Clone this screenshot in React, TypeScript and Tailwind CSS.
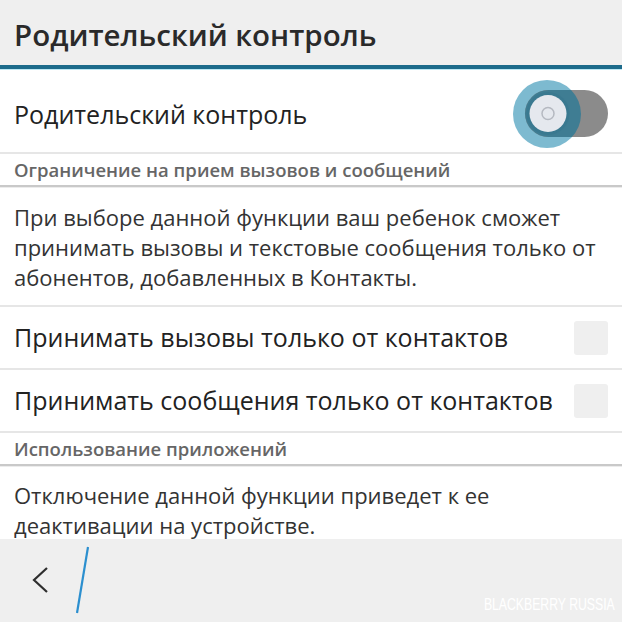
import React from "react";

const font = { fontFamily: '"Open Sans", "Noto Sans", sans-serif' };

function Toggle() {
  return (
    <svg width="100" height="80" viewBox="0 0 100 80" className="shrink-0 mt-[8px]">
      <defs>
        <clipPath id="halo">
          <circle cx="35" cy="39" r="34" />
        </clipPath>
      </defs>
      <circle cx="35" cy="39" r="34" fill="#7dbad0" />
      <rect x="13" y="15" width="83" height="47" rx="23.5" fill="#8b8b8b" />
      <rect x="13" y="15" width="83" height="47" rx="23.5" fill="#3f7d93" clipPath="url(#halo)" />
      <circle cx="36" cy="38.5" r="21.5" fill="#3a7990" />
      <circle cx="36" cy="38.5" r="18.5" fill="#e5e8ee" />
      <circle cx="36" cy="38.5" r="6" fill="none" stroke="#b5b9c1" strokeWidth="1.5" />
    </svg>
  );
}

function SectionHeader({ children }: { children: React.ReactNode }) {
  return (
    <div className="flex flex-col shrink-0">
      <div className="h-[31px] flex items-center px-[14px] text-[18.5px] font-semibold text-[#666666]">
        {children}
      </div>
      <div className="h-[2px] bg-[#c9c9c9]" />
      <div className="h-px bg-[#ececec]" />
    </div>
  );
}

function CheckRow({ label }: { label: string }) {
  return (
    <div className="h-[61px] shrink-0 flex items-center justify-between px-[14px]">
      <span className="text-[25px] text-[#222222]">{label}</span>
      <div className="w-[34px] h-[34px] rounded-[3px] bg-[#efefef]" />
    </div>
  );
}

export default function App() {
  return (
    <div className="w-[622px] h-[622px] overflow-hidden bg-white flex flex-col relative" style={font}>
      {/* title bar */}
      <div className="h-[65px] shrink-0 bg-[#efefef] flex items-center px-[14px]">
        <h1 className="text-[29.5px] font-semibold text-[#2a2a2a] mt-[6px]">Родительский контроль</h1>
      </div>
      <div className="h-[4px] shrink-0 bg-[#1d6b8b]" />
      <div className="h-px shrink-0 bg-[#bfe9f5]" />

      <div className="flex-1 overflow-hidden flex flex-col">
        <div className="h-[82px] shrink-0 flex items-center justify-between pl-[14px] pr-[10px]">
          <span className="text-[25px] text-[#222222] mt-[8px]">Родительский контроль</span>
          <Toggle />
        </div>
        <div className="h-[2px] shrink-0 bg-[#e6e6e6]" />

        <SectionHeader>Ограничение на прием вызовов и сообщений</SectionHeader>

        <p className="shrink-0 h-[117px] pt-[14px] px-[14px] text-[22px] leading-[30px] text-[#333333]">
          При выборе данной функции ваш ребенок сможет принимать вызовы и текстовые сообщения только от абонентов,
          добавленных в Контакты.
        </p>
        <div className="h-[2px] shrink-0 bg-[#e6e6e6]" />

        <CheckRow label="Принимать вызовы только от контактов" />
        <div className="h-[2px] shrink-0 bg-[#e6e6e6]" />
        <CheckRow label="Принимать сообщения только от контактов" />
        <div className="h-[2px] shrink-0 bg-[#e6e6e6]" />

        <SectionHeader>Использование приложений</SectionHeader>

        <p className="pt-[13px] px-[14px] max-w-[560px] text-[22px] leading-[30px] text-[#333333]">
          Отключение данной функции приведет к ее деактивации на устройстве.
        </p>
      </div>

      {/* bottom action bar */}
      <div className="h-[83px] shrink-0 bg-[#efefef] flex items-center relative">
        <svg width="120" height="83" viewBox="0 0 120 83">
          <path d="M47 29 L34 41 L47 53" fill="none" stroke="#2e2e2e" strokeWidth="2.2" />
          <line x1="88" y1="8" x2="77" y2="74" stroke="#2b8fcf" strokeWidth="2.2" />
        </svg>
        <span
          className="absolute right-[7px] bottom-[5px] text-[17px] text-white scale-x-[0.72] origin-right"
          style={{ fontFamily: '"Liberation Sans", sans-serif' }}
        >
          BLACKBERRY RUSSIA
        </span>
      </div>
    </div>
  );
}
